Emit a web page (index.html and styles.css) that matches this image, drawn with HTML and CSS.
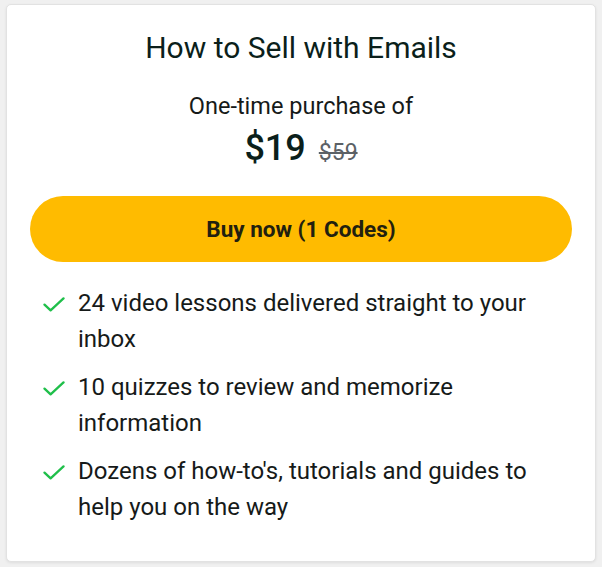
FILE: index.html
```html
<!DOCTYPE html>
<html lang="en">
<head>
<meta charset="utf-8">
<link rel="stylesheet" href="styles.css">
</head>
<body>
<div class="card">
  <h1 class="title">How to Sell with Emails</h1>
  <p class="subtitle">One-time purchase of</p>
  <div class="price">
    <span class="now">$19</span>
    <span class="was">$59</span>
  </div>
  <button class="buy">Buy now (1 Codes)</button>
  <ul class="features">
    <li><svg class="check" viewBox="0 0 22 15" width="22" height="15"><path d="M1.5 7.6 L7.6 13.4 L20.5 1.4" fill="none" stroke="#1fbf4a" stroke-width="2.3" stroke-linecap="round" stroke-linejoin="round"/></svg><span>24 video lessons delivered straight to your inbox</span></li>
    <li><svg class="check" viewBox="0 0 22 15" width="22" height="15"><path d="M1.5 7.6 L7.6 13.4 L20.5 1.4" fill="none" stroke="#1fbf4a" stroke-width="2.3" stroke-linecap="round" stroke-linejoin="round"/></svg><span>10 quizzes to review and memorize information</span></li>
    <li><svg class="check" viewBox="0 0 22 15" width="22" height="15"><path d="M1.5 7.6 L7.6 13.4 L20.5 1.4" fill="none" stroke="#1fbf4a" stroke-width="2.3" stroke-linecap="round" stroke-linejoin="round"/></svg><span>Dozens of how-to's, tutorials and guides to help you on the way</span></li>
  </ul>
</div>
</body>
</html>
```
FILE: styles.css
```css
* { box-sizing: border-box; }
html, body { margin: 0; }
body {
  background: #f0f0f0;
  padding: 4px 6px 5px 6px;
  font-family: Roboto, "Liberation Sans", sans-serif;
  color: #161a19;
  height: 567px;
}
.card {
  background: #fff;
  border: 1px solid #e2e2e2;
  border-radius: 5px;
  box-shadow: 0 1px 3px rgba(0,0,0,0.08);
  height: 558px;
  padding: 21px 23px 0 23px;
  display: flex;
  flex-direction: column;
}
.title {
  margin: 0;
  text-align: center;
  font-size: 30px;
  font-weight: 400;
  line-height: 44px;
  color: #0b1f1b;
}
.subtitle {
  margin: 20px 0 0;
  text-align: center;
  font-size: 23.5px;
  line-height: 32px;
  color: #161a19;
}
.price {
  display: flex;
  justify-content: center;
  align-items: baseline;
  gap: 13px;
  margin-top: 4px;
  line-height: 44px;
}
.now {
  font-size: 36px;
  font-weight: 500;
  color: #0b1f1b;
}
.was {
  font-size: 23px;
  color: #5b6166;
  text-decoration: line-through;
}
.buy {
  margin-top: 21px;
  height: 66px;
  border: none;
  border-radius: 33px;
  background: #ffbb00;
  font-family: Roboto, "Liberation Sans", sans-serif;
  font-size: 22.5px;
  font-weight: 700;
  color: #22200f;
  cursor: pointer;
}
.features {
  list-style: none;
  margin: 23px 0 0;
  padding: 0 0 0 13px;
  display: flex;
  flex-direction: column;
  gap: 12px;
}
.features li {
  display: flex;
  align-items: flex-start;
  gap: 13px;
  font-size: 24px;
  line-height: 36px;
  color: #161a19;
}
.check {
  flex: none;
  margin-top: 12px;
}
```
